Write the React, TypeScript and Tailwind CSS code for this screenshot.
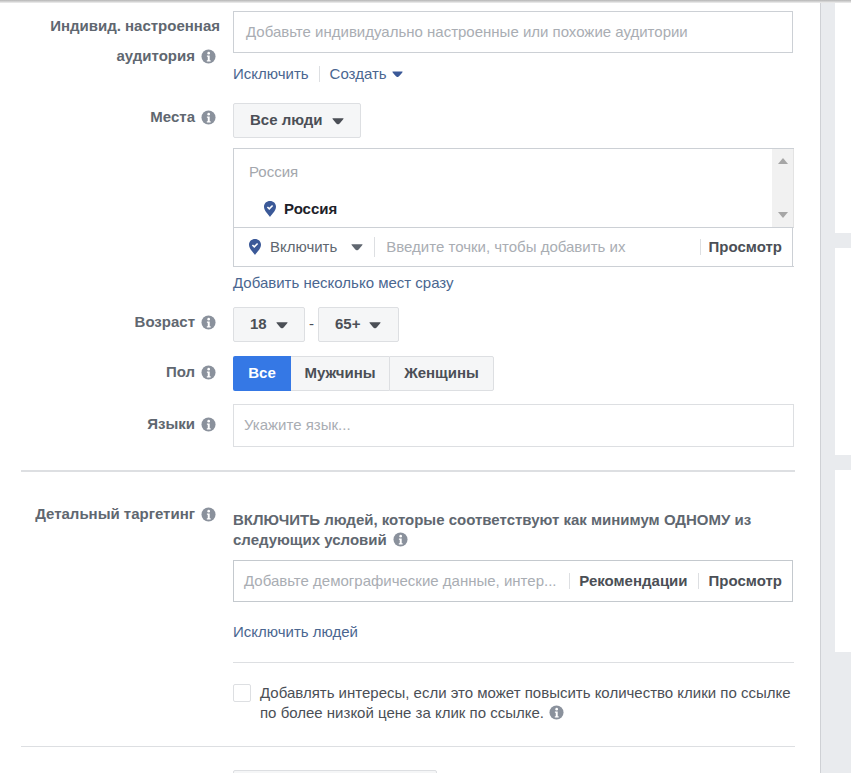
const font = "[font-family:'Liberation_Sans',Arial,sans-serif]";

function Info({ className = '' }: { className?: string }) {
  return (
    <svg viewBox="0 0 16 16" className={`w-[15px] h-[15px] shrink-0 ${className}`}>
      <circle cx="8" cy="8" r="7.5" fill="#8a919c" />
      <circle cx="8.2" cy="4.4" r="1.4" fill="#fff" />
      <path d="M6.3 7h3v5h1v1.2H6.2V12h1V8.2h-.9z" fill="#fff" />
    </svg>
  );
}

function Caret({ color = '#4b4f56', className = '' }: { color?: string; className?: string }) {
  return (
    <svg viewBox="0 0 12 8" className={`w-[12px] h-[8px] shrink-0 ${className}`}>
      <path d="M1 1.2h10c.5 0 .7.5.4.8C9.8 4 8 6.6 6.5 7.2c-.4.1-.7.1-1 0C4 6.6 2.2 4 .6 2c-.3-.3-.1-.8.4-.8z" fill={color} />
    </svg>
  );
}

function Pin() {
  return (
    <svg viewBox="0 0 12 16" className="w-[12px] h-[16px] shrink-0">
      <path d="M6 16C4.6 13.8 0 10 0 5.8 0 2.4 2.6 0 6 0s6 2.4 6 5.8C12 10 7.4 13.8 6 16z" fill="#3b5998" />
      <path d="M3.4 6l1.9 1.9 3.3-3.4" fill="none" stroke="#fff" strokeWidth="1.6" />
    </svg>
  );
}

function Label({ children, className = '' }: { children: React.ReactNode; className?: string }) {
  return (
    <div className={`w-[216px] shrink-0 flex justify-end items-center gap-[6px] text-[15px] font-bold text-[#606770] ${className}`}>
      {children}
      <Info />
    </div>
  );
}

function Select({ text, className = '' }: { text: string; className?: string }) {
  return (
    <div className={`h-[35px] flex items-center gap-[9px] pl-[16px] bg-[#f5f6f7] border border-[#dddfe2] rounded-[2px] text-[15px] font-bold text-[#4b4f56] ${className}`}>
      {text}
      <Caret />
    </div>
  );
}

export default function App() {
  return (
    <div className={`relative w-[851px] h-[773px] overflow-hidden flex bg-[#e9ebee] ${font}`}>
      <div className="absolute top-0 left-0 right-0 h-[3px] bg-gradient-to-b from-[#b5b5b5] to-[#f0f0f0]" />

      <div className="w-[821px] h-full shrink-0 bg-white border-r border-[#cfd1d5] pt-[11px]">
        {/* Custom audience */}
        <div className="flex">
          <div className="w-[216px] shrink-0 text-right text-[15px] font-bold text-[#606770] leading-[30px]">
            <div className="-mr-[4px]">Индивид. настроенная</div>
            <div className="flex justify-end items-center gap-[6px]">
              аудитория
              <Info />
            </div>
          </div>
          <div className="ml-[17px] w-[560px]">
            <div className="h-[42px] border border-[#ccd0d5] flex items-center pl-[12px] text-[15px] text-[#a9adb3]">
              Добавьте индивидуально настроенные или похожие аудитории
            </div>
            <div className="mt-[11px] h-[20px] flex items-center text-[15px] text-[#4a6690]">
              <span>Исключить</span>
              <span className="w-px h-[16px] bg-[#dddfe2] ml-[10px] mr-[10px]" />
              <span>Создать</span>
              <Caret color="#3b5998" className="ml-[5px] !w-[11px]" />
            </div>
          </div>
        </div>

        {/* Places */}
        <div className="flex mt-[19px]">
          <Label className="h-[28px]">Места</Label>
          <div className="ml-[17px] w-[561px]">
            <Select text="Все люди" className="w-[128px]" />
            <div className="mt-[10px] border border-[#ccd0d5] border-r-0 h-[119px] flex flex-col">
              <div className="h-[79px] flex border-b border-[#ccd0d5] border-r border-r-[#e3e3e3]">
                <div className="flex-1 pl-[15px] pt-[14px] text-[15px]">
                  <div className="text-[#a3a7ad] leading-[18px]">Россия</div>
                  <div className="mt-[19px] ml-[15px] flex items-center gap-[8px] font-bold text-[#1d2129] leading-[18px]">
                    <Pin />
                    Россия
                  </div>
                </div>
                <div className="w-[21px] bg-[#f1f1f1] flex flex-col items-center justify-between py-[9px]">
                  <div className="w-0 h-0 border-x-[5px] border-x-transparent border-b-[6px] border-b-[#a6a6a6]" />
                  <div className="w-0 h-0 border-x-[5px] border-x-transparent border-t-[6px] border-t-[#a6a6a6]" />
                </div>
              </div>
              <div className="flex-1 flex items-center pl-[15px] text-[15px] border-r border-[#ccd0d5] mr-px">
                <Pin />
                <span className="ml-[9px] text-[#606770]">Включить</span>
                <Caret className="ml-[14px]" color="#606770" />
                <span className="w-px h-[20px] bg-[#dddfe2] ml-[11px]" />
                <span className="ml-[11px] text-[#a9adb3]">Введите точки, чтобы добавить их</span>
                <span className="w-px h-[16px] bg-[#dddfe2] ml-auto" />
                <span className="ml-[8px] mr-[10px] font-bold text-[#4b4f56]">Просмотр</span>
              </div>
            </div>
            <div className="mt-[7px] h-[18px] leading-[18px] text-[15px] text-[#4a6690]">Добавить несколько мест сразу</div>
          </div>
        </div>

        {/* Age */}
        <div className="flex mt-[15px]">
          <Label className="h-[30px]">Возраст</Label>
          <div className="ml-[17px] flex items-center">
            <Select text="18" className="w-[72px]" />
            <span className="w-[13px] text-center text-[15px] text-[#4b4f56]">-</span>
            <Select text="65+" className="w-[81px]" />
          </div>
        </div>

        {/* Gender */}
        <div className="flex mt-[14px]">
          <Label className="h-[32px]">Пол</Label>
          <div className="ml-[17px] flex h-[35px] text-[15px] font-bold text-[#4b4f56]">
            <div className="w-[58px] flex items-center justify-center bg-[#3578e5] text-white rounded-l-[2px]">Все</div>
            <div className="w-[98px] flex items-center justify-center bg-[#f5f6f7] border-y border-[#dddfe2]">Мужчины</div>
            <div className="w-[105px] flex items-center justify-center bg-[#f5f6f7] border border-[#dddfe2] rounded-r-[2px]">Женщины</div>
          </div>
        </div>

        {/* Languages */}
        <div className="flex mt-[13px]">
          <Label className="h-[40px]">Языки</Label>
          <div className="ml-[17px] w-[561px] h-[43px] border border-[#dddfe2] flex items-center pl-[10px] text-[15px] text-[#a9adb3]">
            Укажите язык...
          </div>
        </div>

        <div className="ml-[21px] w-[774px] h-[2px] bg-[#dddfe2] mt-[23px]" />

        {/* Detailed targeting */}
        <div className="flex mt-[32px]">
          <Label className="h-[20px] self-start">Детальный таргетинг</Label>
          <div className="ml-[17px] w-[561px]">
            <div className="mt-[6px] text-[15px] font-bold text-[#606770] leading-[20px]">
              ВКЛЮЧИТЬ людей, которые соответствуют как минимум ОДНОМУ из
              <br />
              следующих условий <Info className="inline-block align-[-2px] ml-[2px]" />
            </div>
            <div className="mt-[10px] w-[560px] h-[42px] border border-[#c4c9ce] flex items-center pl-[10px] text-[15px]">
              <span className="text-[#a9adb3]">Добавьте демографические данные, интер...</span>
              <span className="w-px h-[16px] bg-[#dddfe2] ml-auto" />
              <span className="ml-[9px] font-bold text-[#4b4f56]">Рекомендации</span>
              <span className="w-px h-[16px] bg-[#dddfe2] ml-[10px]" />
              <span className="ml-[10px] mr-[10px] font-bold text-[#4b4f56]">Просмотр</span>
            </div>
            <div className="mt-[21px] h-[18px] leading-[18px] text-[15px] text-[#4a6690]">Исключить людей</div>
            <div className="mt-[21px] h-px bg-[#dddfe2]" />
            <div className="mt-[20px] flex">
              <div className="w-[18px] h-[18px] mt-px shrink-0 border border-[#dddfe2] rounded-[2px]" />
              <div className="ml-[9px] text-[15px] leading-[20px] text-[#4b4f56] whitespace-nowrap">
                Добавлять интересы, если это может повысить количество клики по ссылке
                <br />
                по более низкой цене за клик по ссылке. <Info className="inline-block align-[-2px] ml-[1px]" />
              </div>
            </div>
          </div>
        </div>

        <div className="ml-[21px] w-[774px] h-px bg-[#dddfe2] mt-[23px]" />
        <div className="ml-[233px] mt-[23px] w-[204px] h-[35px] bg-[#f5f6f7] border border-[#dddfe2] rounded-[2px]" />
      </div>

      {/* Right column */}
      <div className="flex-1 pl-[14px] flex flex-col gap-[15px]">
        <div className="h-[233px] bg-white" />
        <div className="h-[207px] bg-white" />
        <div className="h-[182px] bg-white" />
      </div>
    </div>
  );
}
